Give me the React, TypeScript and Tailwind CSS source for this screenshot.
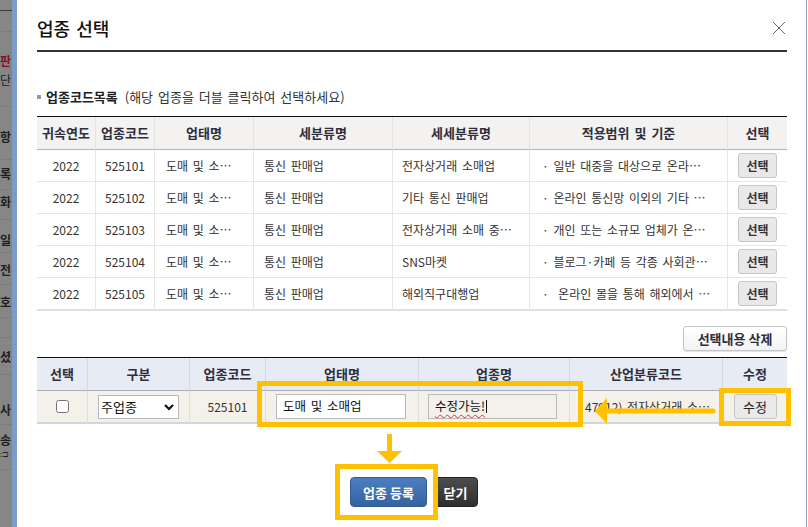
import React from 'react';

const codeRows = [
  ['2022', '525101', '도매 및 소⋯', '통신 판매업', '전자상거래 소매업', '· 일반 대중을 대상으로 온라⋯'],
  ['2022', '525102', '도매 및 소⋯', '통신 판매업', '기타 통신 판매업', '· 온라인 통신망 이외의 기타 ⋯'],
  ['2022', '525103', '도매 및 소⋯', '통신 판매업', '전자상거래 소매 중⋯', '· 개인 또는 소규모 업체가 온⋯'],
  ['2022', '525104', '도매 및 소⋯', '통신 판매업', 'SNS마켓', '· 블로그·카페 등 각종 사회관⋯'],
  ['2022', '525105', '도매 및 소⋯', '통신 판매업', '해외직구대행업', '·  온라인 몰을 통해 해외에서 ⋯'],
];

const codeHeads = ['귀속연도', '업종코드', '업태명', '세분류명', '세세분류명', '적용범위 및 기준', '선택'];
const pickHeads = ['선택', '구분', '업종코드', '업태명', '업종명', '산업분류코드', '수정'];

function BackPage() {
  // the page behind the dimmed overlay, mostly cut off
  return (
    <div className="w-[12px] shrink-0 bg-[#868686] flex flex-col overflow-hidden text-[12px] leading-none font-bold text-[#1e1e1e]">
      <div className="h-[11px] shrink-0 border-b border-[#3c3c3c]" />
      <div className="h-[21px] shrink-0 border-b border-[#7c7c7c]" />
      <div className="h-[75px] shrink-0 border-b border-[#7c7c7c] pt-[23px]">
        <div className="text-[#7d1228]">판</div>
        <div className="font-normal mt-[7px]">단</div>
      </div>
      <div className="h-[53px] shrink-0 border-b border-[#7c7c7c] pt-[24px]">항</div>
      <div className="h-[30px] shrink-0 border-b border-[#7c7c7c] pt-[8px]">록</div>
      <div className="h-[30px] shrink-0 border-b border-[#7c7c7c] pt-[6px]">화</div>
      <div className="h-[33px] shrink-0 border-b border-[#7c7c7c] pt-[14px]">일</div>
      <div className="h-[32px] shrink-0 border-b border-[#7c7c7c] pt-[11px]">전</div>
      <div className="h-[33px] shrink-0 border-b border-[#7c7c7c] pt-[11px]">호</div>
      <div className="h-[20px] shrink-0 border-b border-[#7c7c7c]" />
      <div className="h-[37px] shrink-0 border-b border-[#7c7c7c] pt-[13px]">셨</div>
      <div className="h-[50px] shrink-0 border-b border-[#7c7c7c] pt-[29px]">사</div>
      <div className="h-[45px] shrink-0 border-b border-[#7c7c7c] pt-[9px]">
        <div>송</div>
        <div className="text-[8px] font-normal mt-[4px]">:⊐</div>
      </div>
    </div>
  );
}

function SmallButton({ label }: { label: string }) {
  return (
    <button className="h-[25px] px-[7px] bg-[#e9e9e9] border border-[#c6c6c6] rounded-[3px] text-[12px] font-bold text-[#333] leading-none">
      {label}
    </button>
  );
}

export default function App() {
  return (
    <div className="relative w-[808px] h-[527px] flex bg-white overflow-hidden font-['Noto_Sans_CJK_KR','Liberation_Sans',sans-serif] text-[#333] [word-spacing:2px]">
      <BackPage />
      <div className="w-[5px] shrink-0 bg-[#7b9cc9]" />

      <div className="w-[790px] shrink-0 border-r border-[#8ea3c6] pl-[20px] pr-[19px] flex flex-col">
        {/* title */}
        <div className="h-[52px] pt-[5px] flex items-center justify-between border-b-2 border-[#333]">
          <h2 className="text-[18px] font-medium text-[#111] leading-none">업종 선택</h2>
          <svg width="14" height="14" viewBox="0 0 14 14" className="mr-[1px]">
            <path d="M1 1 L13 13 M13 1 L1 13" stroke="#666" strokeWidth="1" fill="none" />
          </svg>
        </div>

        {/* section label */}
        <div className="mt-[36px] h-[18px] flex items-center text-[13px]">
          <span className="w-[4px] h-[4px] bg-[#999] mr-[5px]" />
          <span className="font-bold text-[#222]">업종코드목록</span>
          <span className="ml-[7px] text-[#333]">(해당 업종을 더블 클릭하여 선택하세요)</span>
        </div>

        {/* code list */}
        <div className="mt-[10px] border-t border-[#111] grid grid-cols-[59px_59px_99px_139px_137px_198px_59px] text-[12px]">
          {codeHeads.map((h, i) => (
            <div
              key={h}
              className={`h-[33px] bg-[#f3f2f0] border-b border-[#b4b4b4] flex items-center justify-center text-[13px] font-bold text-[#2e2e3e] ${i < 6 ? 'border-r border-r-[#e3e3e3]' : ''}`}
            >
              {h}
            </div>
          ))}
          {codeRows.map((r, ri) => {
            const last = ri === codeRows.length - 1;
            const cell = last ? 'h-[33px] border-b-2 border-[#e0e0e0]' : 'h-[32px] border-b border-[#e6e6e6]';
            return (
              <React.Fragment key={r[1]}>
                <div className={`${cell} border-r border-r-[#e6e6e6] flex items-center justify-center`}>{r[0]}</div>
                <div className={`${cell} border-r border-r-[#e6e6e6] flex items-center justify-center`}>{r[1]}</div>
                <div className={`${cell} border-r border-r-[#e6e6e6] flex items-center pl-[11px] whitespace-nowrap overflow-hidden`}>{r[2]}</div>
                <div className={`${cell} border-r border-r-[#e6e6e6] flex items-center pl-[10px] whitespace-nowrap overflow-hidden`}>{r[3]}</div>
                <div className={`${cell} border-r border-r-[#e6e6e6] flex items-center pl-[9px] whitespace-nowrap overflow-hidden`}>{r[4]}</div>
                <div className={`${cell} border-r border-r-[#e6e6e6] flex items-center pl-[12px] whitespace-pre overflow-hidden`}>{r[5]}</div>
                <div className={`${cell} flex items-center justify-center`}>
                  <SmallButton label="선택" />
                </div>
              </React.Fragment>
            );
          })}
        </div>

        <div className="mt-[15px] flex justify-end">
          <button className="h-[25px] w-[104px] bg-gradient-to-b from-white to-[#f3f3f3] border border-[#c4c4c4] rounded-[3px] shadow-[0_1px_1px_rgba(0,0,0,0.12)] text-[13px] font-bold text-[#2e2e3e] leading-none [word-spacing:0px]">
            선택내용 삭제
          </button>
        </div>

        {/* picked codes */}
        <div className="mt-[6px] border-t border-[#111] grid grid-cols-[51px_102px_76px_153px_151px_153px_64px] text-[12px]">
          {pickHeads.map((h, i) => (
            <div
              key={h + i}
              className={`h-[33px] bg-[#e7ebf3] border-b border-[#a9aeb6] flex items-center justify-center text-[13px] font-bold text-[#2e2e3e] ${i < 6 ? 'border-r border-r-[#d3d9e3]' : ''}`}
            >
              {h}
            </div>
          ))}
          <div className="h-[33px] bg-[#f4f0ea] border-b-2 border-[#d2d7df] border-r border-r-[#e2ddd5] flex items-center justify-center">
            <input type="checkbox" className="w-[13px] h-[13px]" />
          </div>
          <div className="h-[33px] bg-[#f4f0ea] border-b-2 border-[#d2d7df] border-r border-r-[#e2ddd5] flex items-center pl-[10px]">
            <div className="relative w-[81px] h-[24px]">
              <select className="appearance-none w-full h-full bg-white border border-[#b9b9b9] pl-[2px] text-[13px] text-[#111] outline-none">
                <option>주업종</option>
              </select>
              <svg width="10" height="7" viewBox="0 0 10 7" className="absolute right-[5px] top-[9px] pointer-events-none">
                <path d="M1 1 L5 5 L9 1" stroke="#111" strokeWidth="2.2" fill="none" />
              </svg>
            </div>
          </div>
          <div className="h-[33px] bg-[#f4f0ea] border-b-2 border-[#d2d7df] border-r border-r-[#e2ddd5] flex items-center justify-center">
            525101
          </div>
          <div className="h-[33px] bg-[#f4f0ea] border-b-2 border-[#d2d7df] border-r border-r-[#e2ddd5] flex items-center pl-[10px]">
            <div className="w-[130px] h-[25px] bg-white border border-[#b9b9b9] flex items-center pl-[6px] text-[12.5px] text-[#111]">
              도매 및 소매업
            </div>
          </div>
          <div className="h-[33px] bg-[#f4f0ea] border-b-2 border-[#d2d7df] border-r border-r-[#e2ddd5] flex items-center pl-[9px]">
            <div className="w-[129px] h-[25px] bg-[#f4f0ea] border border-[#b9b9b9] flex items-center pl-[6px] text-[12.5px] text-[#111]">
              <span className="underline decoration-wavy decoration-[#e0303a] decoration-1 underline-offset-[3px]">수정가능!</span>
              <span className="w-[1px] h-[13px] bg-[#111] ml-[1px]" />
            </div>
          </div>
          <div className="h-[33px] bg-[#f4f0ea] border-b-2 border-[#d2d7df] border-r border-r-[#e2ddd5] flex items-center pl-[15px] whitespace-nowrap overflow-hidden">
            47912) 전자상거래 소⋯
          </div>
          <div className="h-[33px] bg-[#f4f0ea] border-b-2 border-[#d2d7df] flex items-center justify-center">
            <button className="h-[25px] w-[43px] bg-[#e9e9e9] border border-[#c6c6c6] rounded-[3px] text-[13px] text-[#222] leading-none">
              수정
            </button>
          </div>
        </div>

        <div className="mt-[53px] pl-[4px] flex justify-center gap-[6px]">
          <button className="h-[30px] w-[77px] rounded-[4px] border border-[#2f5a92] bg-gradient-to-b from-[#4c7fc0] to-[#3563a0] text-white text-[13px] font-bold leading-none">
            업종 등록
          </button>
          <button className="h-[30px] w-[45px] rounded-[4px] border border-[#222] bg-gradient-to-b from-[#4d4d4d] to-[#2f2f2f] text-white text-[13px] font-bold leading-none">
            닫기
          </button>
        </div>
      </div>

      {/* callout marks drawn over the screenshot */}
      <svg className="absolute inset-0 pointer-events-none" width="808" height="527" viewBox="0 0 808 527">
        <g fill="none" stroke="#ffc000" strokeWidth="5">
          <rect x="259.5" y="383.5" width="321" height="41" />
          <rect x="721.5" y="390.5" width="67" height="33" />
          <rect x="337.5" y="466.5" width="98" height="51" />
          <path d="M713 411 H604" strokeLinecap="round" />
          <path d="M389.5 434 V452" />
        </g>
        <g fill="#ffc000">
          <path d="M595 411 L607 398 L607 424 Z" />
          <path d="M377 451 L402 451 L389.5 463 Z" />
        </g>
      </svg>
    </div>
  );
}
